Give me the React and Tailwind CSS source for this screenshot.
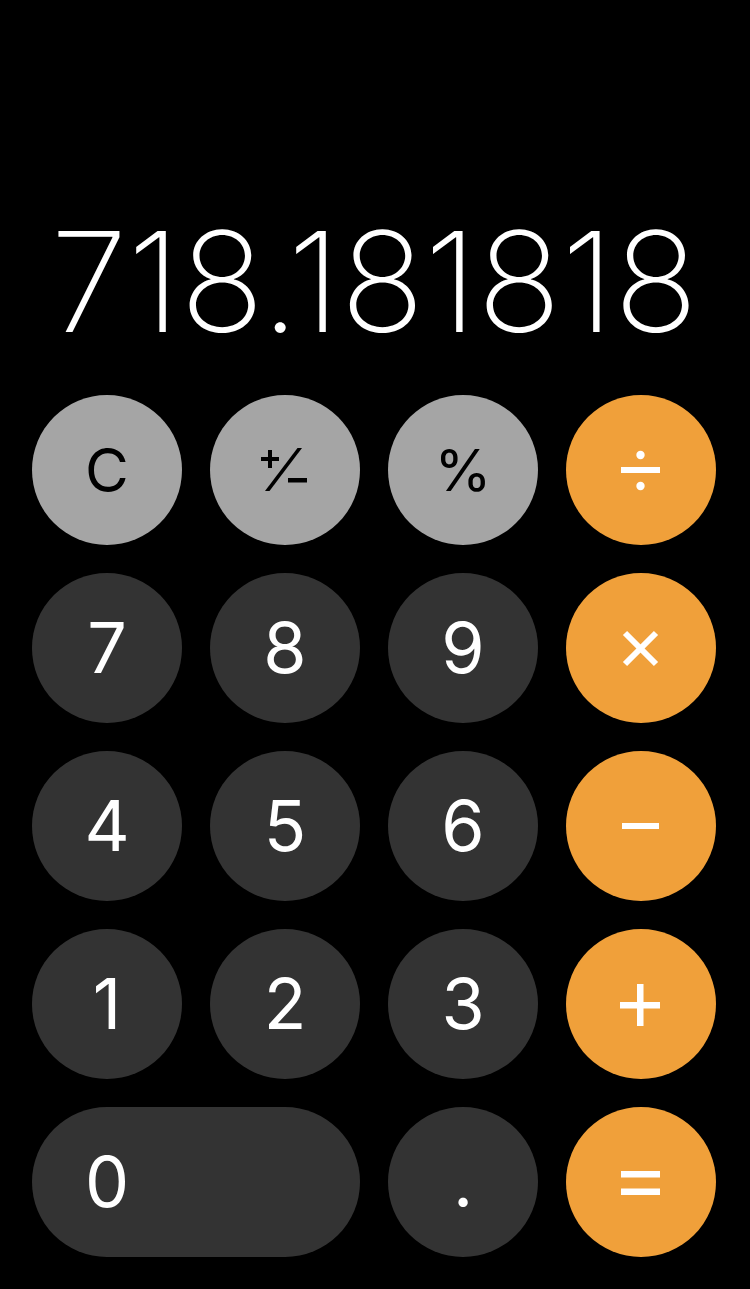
import React from 'react';

const gray = 'bg-[#a5a5a5] text-black';
const dark = 'bg-[#333333] text-white';
const orange = 'bg-[#f0a03a] text-white';

function OpIcon({ op }) {
    // operator glyphs drawn on a 150x150 box, same as the button
    const common = { fill: 'white' };
    return (
        <svg width="150" height="150" viewBox="0 0 150 150" className="block">
            {op === 'div' && (
                <g {...common}>
                    <rect x="55" y="72" width="39" height="6" />
                    <circle cx="74.5" cy="60" r="4.2" />
                    <circle cx="74.5" cy="91" r="4.2" />
                </g>
            )}
            {op === 'mul' && (
                <g stroke="white" strokeWidth="6">
                    <line x1="59" y1="60" x2="90" y2="91" />
                    <line x1="90" y1="60" x2="59" y2="91" />
                </g>
            )}
            {op === 'sub' && <rect x="56" y="72" width="37" height="6" fill="white" />}
            {op === 'add' && (
                <g {...common}>
                    <rect x="54" y="73" width="40" height="6.5" />
                    <rect x="71" y="55" width="6.5" height="42" />
                </g>
            )}
            {op === 'eq' && (
                <g {...common}>
                    <rect x="55" y="64" width="39" height="6.5" />
                    <rect x="55" y="81.5" width="39" height="6.5" />
                </g>
            )}
            {op === 'neg' && (
                <g fill="black">
                    <rect x="51" y="62" width="18" height="4" />
                    <rect x="58" y="55" width="4" height="18" />
                    <polygon points="55,96 59.5,96 92,53 87.5,53" />
                    <rect x="78" y="83" width="19" height="4.5" />
                </g>
            )}
        </svg>
    );
}

function Key({ children, tone, wide }) {
    return (
        <button
            className={`h-[150px] rounded-full flex items-center justify-start ${tone} ${wide ? 'col-span-2' : ''}`}
        >
            <span className="w-[150px] h-[150px] flex items-center justify-center">{children}</span>
        </button>
    );
}

export default function App() {
    const txt = "text-[70px] font-normal leading-none";
    return (
        <div
            className="w-[750px] h-[1289px] bg-black flex flex-col overflow-hidden"
            style={{ fontFamily: 'Inter, "Noto Sans", sans-serif' }}
        >
            <div className="flex-1 flex items-end justify-end pr-[52px] pb-[44px]">
                <div className="text-white text-[139px] font-extralight leading-none tracking-normal">
                    718.181818
                </div>
            </div>
            <div className="grid grid-cols-[repeat(4,150px)] gap-x-[28px] gap-y-[28px] px-[32px] pb-[32px]">
                <Key tone={gray}><span className="text-[60px] leading-none">C</span></Key>
                <Key tone={gray}><OpIcon op="neg" /></Key>
                <Key tone={gray}><span className="text-[58px] leading-none">%</span></Key>
                <Key tone={orange}><OpIcon op="div" /></Key>

                <Key tone={dark}><span className={txt}>7</span></Key>
                <Key tone={dark}><span className={txt}>8</span></Key>
                <Key tone={dark}><span className={txt}>9</span></Key>
                <Key tone={orange}><OpIcon op="mul" /></Key>

                <Key tone={dark}><span className={txt}>4</span></Key>
                <Key tone={dark}><span className={txt}>5</span></Key>
                <Key tone={dark}><span className={txt}>6</span></Key>
                <Key tone={orange}><OpIcon op="sub" /></Key>

                <Key tone={dark}><span className={txt}>1</span></Key>
                <Key tone={dark}><span className={txt}>2</span></Key>
                <Key tone={dark}><span className={txt}>3</span></Key>
                <Key tone={orange}><OpIcon op="add" /></Key>

                <Key tone={dark} wide><span className={txt}>0</span></Key>
                <Key tone={dark}><span className={txt}>.</span></Key>
                <Key tone={orange}><OpIcon op="eq" /></Key>
            </div>
        </div>
    );
}
